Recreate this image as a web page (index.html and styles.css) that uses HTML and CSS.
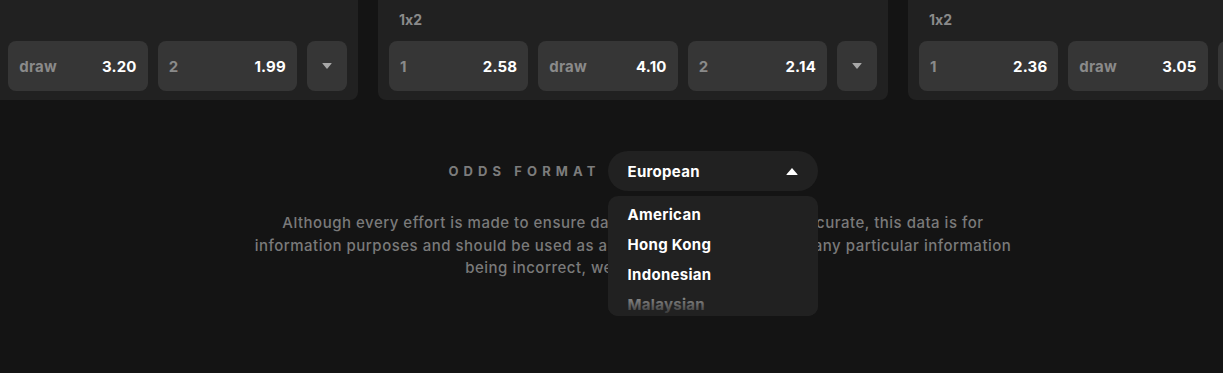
FILE: index.html
```html
<!DOCTYPE html>
<html lang="en">

<head>
    <meta charset="UTF-8">
    <meta name="viewport" content="width=device-width, initial-scale=1.0">
    <title>Odds</title>
    <link rel="stylesheet" href="styles.css">
</head>

<body>
    <div class="markets">
        <div class="markets-track">
            <div class="market">
                <div class="market-title">1x2</div>
                <div class="odds-row">
                    <div class="odd"><span class="odd-label">1</span><span class="odd-value">2.41</span></div>
                    <div class="odd"><span class="odd-label">draw</span><span class="odd-value">3.20</span></div>
                    <div class="odd"><span class="odd-label">2</span><span class="odd-value">1.99</span></div>
                    <div class="odd-more"><span class="caret-down"></span></div>
                </div>
            </div>
            <div class="market">
                <div class="market-title">1x2</div>
                <div class="odds-row">
                    <div class="odd"><span class="odd-label">1</span><span class="odd-value">2.58</span></div>
                    <div class="odd"><span class="odd-label">draw</span><span class="odd-value">4.10</span></div>
                    <div class="odd"><span class="odd-label">2</span><span class="odd-value">2.14</span></div>
                    <div class="odd-more"><span class="caret-down"></span></div>
                </div>
            </div>
            <div class="market">
                <div class="market-title">1x2</div>
                <div class="odds-row">
                    <div class="odd"><span class="odd-label">1</span><span class="odd-value">2.36</span></div>
                    <div class="odd"><span class="odd-label">draw</span><span class="odd-value">3.05</span></div>
                    <div class="odd"><span class="odd-label">2</span><span class="odd-value">2.87</span></div>
                    <div class="odd-more"><span class="caret-down"></span></div>
                </div>
            </div>
        </div>
    </div>

    <div class="footer">
        <div class="format-row">
            <div class="format-label">ODDS FORMAT</div>
            <div class="format-select">
                <div class="select-current">
                    <span>European</span>
                    <span class="caret-up"></span>
                </div>
                <div class="select-menu">
                    <div class="select-item">American</div>
                    <div class="select-item">Hong Kong</div>
                    <div class="select-item">Indonesian</div>
                    <div class="select-item">Malaysian</div>
                </div>
            </div>
        </div>

        <p class="disclaimer">
            Although every effort is made to ensure data is up to date and fully accurate, this data is for<br>
            information purposes and should be used as a guide. We're not liable for any particular information<br>
            being incorrect, we accept no responsibility
        </p>
    </div>
</body>

</html>
```

FILE: styles.css
```css
* {
    box-sizing: border-box;
    font-family: Inter, "Open Sans", Arial, sans-serif;
    font-feature-settings: "calt" 0;
}

:root {
    --color-bg: #141414;
    --color-card: #212121;
    --color-btn: #363636;
    --color-muted: #8a8a8a;
    --color-text: #ffffff;
}

html {
    overflow: hidden;
}

body {
    margin: 0;
    min-height: 373px;
    background-color: var(--color-bg);
}

.markets {
    overflow: hidden;
    margin-top: -20px;
}

.markets-track {
    display: flex;
    gap: 20px;
    margin-left: -152px;
}

.market {
    flex: 0 0 510px;
    background-color: var(--color-card);
    border-radius: 8px;
    padding: 30px 11px 9px;
}

.market-title {
    color: var(--color-muted);
    font-size: 14px;
    font-weight: 700;
    line-height: 20px;
    padding-left: 10px;
    margin-bottom: 11px;
}

.odds-row {
    display: flex;
    gap: 10px;
}

.odd {
    flex: 1;
    height: 50px;
    background-color: var(--color-btn);
    border-radius: 8px;
    display: flex;
    align-items: center;
    justify-content: space-between;
    padding: 0 11px;
    font-size: 15px;
    font-weight: 700;
    letter-spacing: 0.2px;
}

.odd-label {
    color: var(--color-muted);
}

.odd-value {
    color: var(--color-text);
}

.odd-more {
    flex: 0 0 40px;
    height: 50px;
    background-color: var(--color-btn);
    border-radius: 8px;
    display: flex;
    align-items: center;
    justify-content: center;
}

.caret-down {
    width: 0;
    height: 0;
    border-left: 5px solid transparent;
    border-right: 5px solid transparent;
    border-top: 6px solid #a8a8a8;
    border-radius: 1px;
}

.caret-up {
    width: 0;
    height: 0;
    border-left: 6px solid transparent;
    border-right: 6px solid transparent;
    border-bottom: 7px solid #ffffff;
    border-radius: 1px;
}

.footer {
    margin-left: 43px;
    margin-top: 51px;
    display: flex;
    flex-direction: column;
    align-items: center;
}

.format-row {
    display: flex;
    align-items: center;
    gap: 7px;
}

.format-label {
    color: #7c7c7c;
    font-size: 13px;
    font-weight: 700;
    letter-spacing: 5.1px;
}

.format-select {
    position: relative;
    width: 210px;
}

.select-current {
    height: 40px;
    border-radius: 20px;
    background-color: var(--color-card);
    display: flex;
    align-items: center;
    justify-content: space-between;
    padding: 0 20px;
    color: var(--color-text);
    font-size: 15px;
    font-weight: 700;
    letter-spacing: 0.3px;
}

.select-menu {
    position: absolute;
    top: 45px;
    left: 0;
    width: 210px;
    height: 120px;
    overflow: hidden;
    background-color: var(--color-card);
    border-radius: 10px;
    padding-top: 4px;
    z-index: 2;
}

.select-menu::after {
    content: "";
    position: absolute;
    left: 0;
    right: 0;
    bottom: 0;
    height: 24px;
    background: linear-gradient(to bottom, rgba(33, 33, 33, 0.4), rgba(33, 33, 33, 0.95));
}

.select-item {
    height: 30px;
    line-height: 30px;
    padding: 0 20px;
    color: var(--color-text);
    font-size: 15px;
    font-weight: 700;
    letter-spacing: 0.3px;
}

.disclaimer {
    margin: 21px 0 0;
    text-align: center;
    color: #7a7a7a;
    font-size: 15px;
    font-weight: 500;
    line-height: 22.5px;
    letter-spacing: 0.5px;
}
```
